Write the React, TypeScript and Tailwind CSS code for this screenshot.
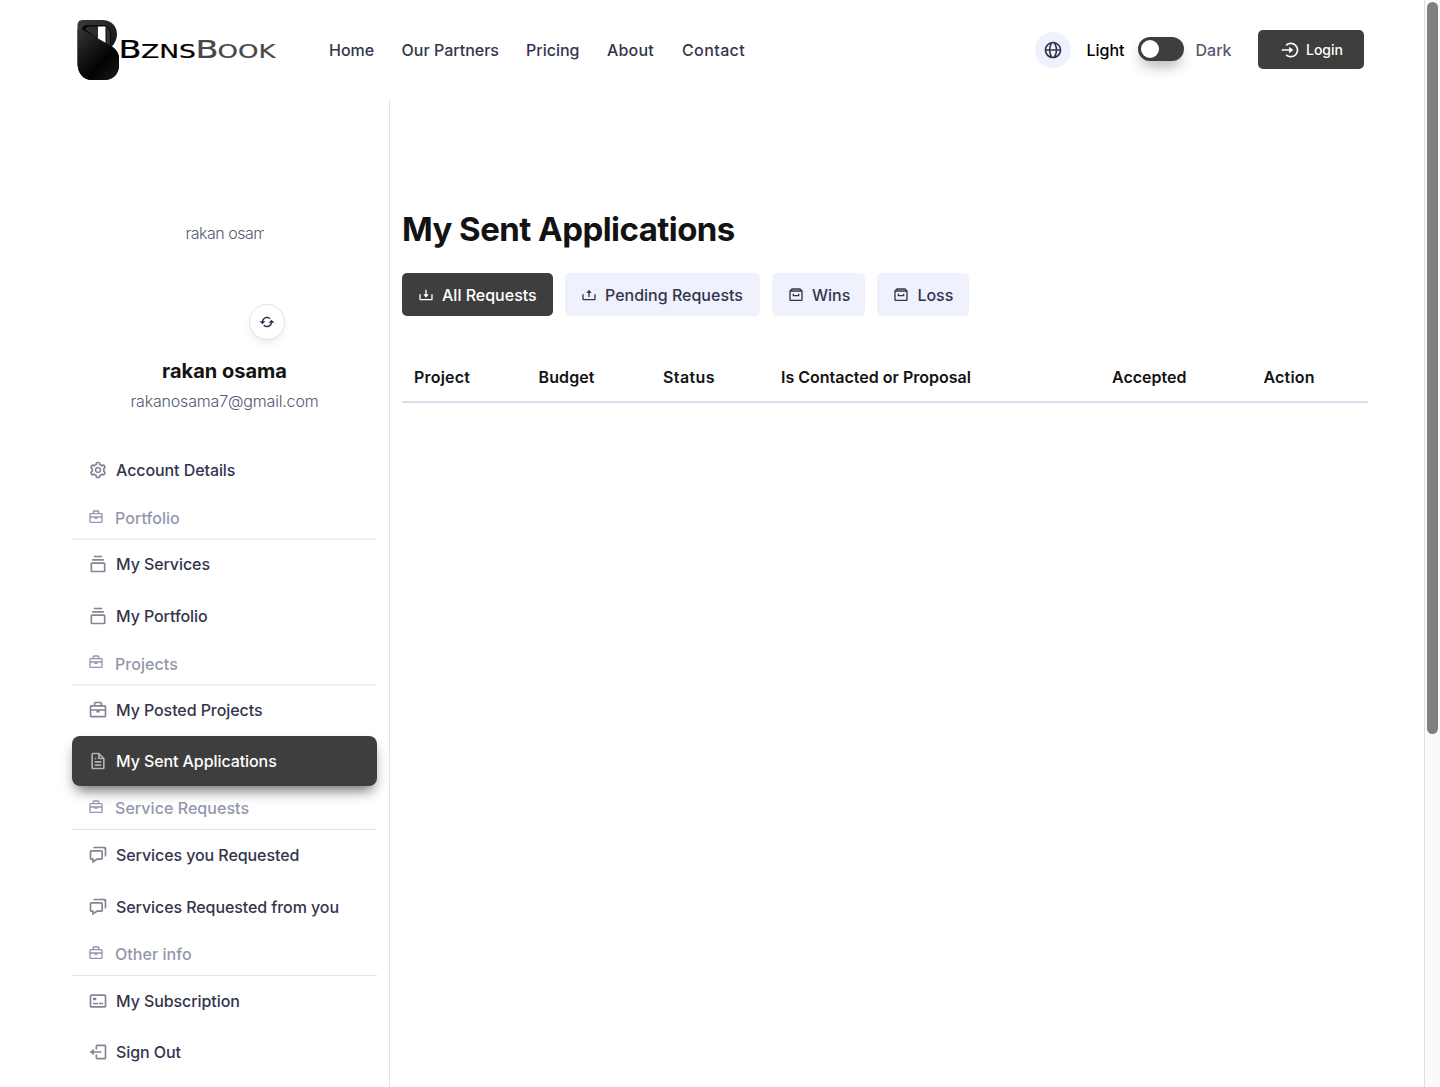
import type { ReactNode } from 'react';
import type { IconType } from 'react-icons';
import {
  BiArchive,
  BiBriefcase,
  BiChat,
  BiCog,
  BiCollection,
  BiCreditCardFront,
  BiDownload,
  BiFile,
  BiGlobe,
  BiLogInCircle,
  BiLogOut,
  BiRefresh,
  BiUpload,
} from 'react-icons/bi';

const NAV_LINKS = [
  { label: 'Home', style: 'w-[44.6px]' },
  { label: 'Our Partners', style: 'w-[96.4px]' },
  { label: 'Pricing', style: 'w-[53px]' },
  { label: 'About', style: 'w-[47px] tracking-[0.2px]' },
  { label: 'Contact', style: 'w-[64px] tracking-[0.4px]' },
];

const TABS: { label: string; icon: IconType; width: string; active?: boolean }[] = [
  { label: 'All Requests', icon: BiDownload, width: 'w-[151px]', active: true },
  { label: 'Pending Requests', icon: BiUpload, width: 'w-[195px]' },
  { label: 'Wins', icon: BiArchive, width: 'w-[93.4px]' },
  { label: 'Loss', icon: BiArchive, width: 'w-[91.6px]' },
];

const COLUMNS = [
  { label: 'Project', width: 'w-[124.5px]', tracking: 'tracking-[0.2px]' },
  { label: 'Budget', width: 'w-[124.5px]', tracking: 'tracking-[0.1px]' },
  { label: 'Status', width: 'w-[118px]', tracking: 'tracking-[0.4px]' },
  { label: 'Is Contacted or Proposal', width: 'w-[331px]', tracking: 'tracking-normal' },
  { label: 'Accepted', width: 'w-[151.5px]', tracking: 'tracking-normal' },
  { label: 'Action', width: 'w-[116.5px]', tracking: 'tracking-[0.2px]' },
];

function Logo() {
  return (
    <svg width="202" height="64" viewBox="0 0 202 64" aria-label="BznsBook">
      <defs>
        <linearGradient id="rim" x1="0" y1="0" x2="1" y2="1">
          <stop offset="0" stopColor="#3a3c3b" />
          <stop offset="0.5" stopColor="#222" />
          <stop offset="1" stopColor="#000" />
        </linearGradient>
        <linearGradient id="body" x1="0" y1="0" x2="0.8" y2="1">
          <stop offset="0" stopColor="#343434" />
          <stop offset="0.7" stopColor="#020202" />
          <stop offset="1" stopColor="#151515" />
        </linearGradient>
      </defs>
      <path
        d="M7 2H26C35 2 41 8 41 16C41 21 39 25 36 28.500C40 31 43 35 43 41V47C43 56 37 62 28 62H16C7 62 1.500 55 1.500 45V8C1.500 4 3 2 7 2Z"
        fill="url(#rim)"
      />
      <path d="M6 12C6 9 8 7 12 7H27C32 7 35 11 35 16V27L22 20Z" fill="#080808" />
      <path d="M9 11.500C10 9.500 11 8.500 13 8.500H22V20Z" fill="#2d2d2d" />
      <path d="M22 8.500H29.500V25L22 20.500Z" fill="#fff" />
      <path d="M30.500 8.500C33 10 34 13 34 17V27L30.500 25Z" fill="#333" />
      <path
        d="M5 11L34 27.500C40 31 43 35 43 41V47C43 56 37 62 28 62H16C7 62 1.500 55 1.500 45V11Z"
        fill="url(#body)"
      />
      <g fontFamily="'DejaVu Sans', sans-serif" fontSize="24" strokeWidth="0.2">
        <text x="42.500" y="39.500" stroke="#000" textLength="23" lengthAdjust="spacingAndGlyphs">B</text>
        <text x="65" y="39.500" stroke="#000" fontSize="19" textLength="55" lengthAdjust="spacingAndGlyphs">ZNS</text>
        <text x="119.500" y="39.500" fill="#484848" stroke="#484848" textLength="23" lengthAdjust="spacingAndGlyphs">B</text>
        <text x="141.500" y="39.500" fontSize="19" fill="#484848" stroke="#484848" textLength="58" lengthAdjust="spacingAndGlyphs">OOK</text>
      </g>
    </svg>
  );
}

function Header() {
  return (
    <header className="flex h-[100px] items-center pl-[76px] pr-[60px]">
      <div className="h-16 w-[202px]">
        <Logo />
      </div>
      <nav className="ml-[51px] flex gap-7 text-[#33354d]">
        {NAV_LINKS.map((link) => (
          <a key={link.label} href="#" className={`whitespace-nowrap ${link.style}`}>
            {link.label}
          </a>
        ))}
      </nav>
      <button className="ml-auto flex size-9 items-center justify-center rounded-full bg-[#eff1fc] text-[#33354d]">
        <BiGlobe size={20} />
      </button>
      <span className="ml-4 w-[39px] text-black">Light</span>
      <div className="ml-3 mb-0.5 flex h-6 w-[46px] items-center rounded-full bg-[#3e3e3e] px-[3px] shadow-[0_8px_14px_-3px_rgba(0,0,0,0.3)]">
        <div className="size-[18px] rounded-full bg-white" />
      </div>
      <span className="ml-3 w-[35px] text-[#565973]">Dark</span>
      <button className="mb-px ml-[27.500px] flex h-[39px] w-[106px] items-center justify-center gap-1.5 rounded-[5px] bg-[#3e3e3e] pl-px text-sm text-white">
        <BiLogInCircle size={20} />
        Login
      </button>
    </header>
  );
}

function SideItem({ icon: Icon, active, children }: { icon: IconType; active?: boolean; children: ReactNode }) {
  return (
    <a
      href="#"
      className={`mb-0.5 flex h-[49.500px] items-center gap-2 rounded-lg pl-4 tracking-[-0.08px] ${
        active
          ? '-mt-[0.5px] bg-[#3e3e3e] text-white shadow-[0_8px_14px_-4px_rgba(0,0,0,0.6)]'
          : 'text-[#33354d]'
      }`}
    >
      <Icon size={20} className="opacity-60" />
      <span>{children}</span>
    </a>
  );
}

function SideSection({ children, soft }: { children: ReactNode; soft?: boolean }) {
  return (
    <div
      className={`flex items-center gap-[11px] pl-4 tracking-[0.05px] text-[#9397ad] ${
        soft
          ? '-mb-[0.5px] h-[43px] border-b-2 border-[#f1f1f8] pt-px'
          : 'h-[42.8px] border-b border-[#e2e2ee]'
      }`}
    >
      <BiBriefcase size={16} className="mb-[3px]" />
      <span>{children}</span>
    </div>
  );
}

function Sidebar() {
  return (
    <aside className="w-[390px] shrink-0 border-r border-[#e2e2ee] pl-[72px] pr-3">
      <div className="flex h-[345.5px] flex-col items-center">
        {/* avatar alt text, clipped by the round frame */}
        <div className="mt-[121px] h-[19px] w-[78px] overflow-hidden rounded-t-lg font-light leading-6 tracking-[-0.5px] text-[#565973]">
          <span className="whitespace-nowrap">rakan osama</span>
        </div>
        <button className="ml-[84px] mt-[64px] flex size-9 shrink-0 items-center justify-center rounded-full border border-[#e2e2f2] bg-white text-[#33354d] shadow-[0_4px_8px_-2px_rgba(0,0,0,0.1)]">
          <BiRefresh size={18} />
        </button>
        <h2 className="mt-[17px] text-xl font-bold leading-7 text-[#131313]">rakan osama</h2>
        <p className="mt-1 font-light tracking-[-0.18px] text-[#565973]">rakanosama7@gmail.com</p>
      </div>
      <SideItem icon={BiCog}>Account Details</SideItem>
      <SideSection soft>Portfolio</SideSection>
      <SideItem icon={BiCollection}>My Services</SideItem>
      <SideItem icon={BiCollection}>My Portfolio</SideItem>
      <SideSection soft>Projects</SideSection>
      <SideItem icon={BiBriefcase}>My Posted Projects</SideItem>
      <SideItem icon={BiFile} active>My Sent Applications</SideItem>
      <SideSection>Service Requests</SideSection>
      <SideItem icon={BiChat}>Services you Requested</SideItem>
      <SideItem icon={BiChat}>Services Requested from you</SideItem>
      <SideSection>Other info</SideSection>
      <SideItem icon={BiCreditCardFront}>My Subscription</SideItem>
      <SideItem icon={BiLogOut}>Sign Out</SideItem>
    </aside>
  );
}

function Applications() {
  return (
    <main className="flex-1 pl-3 pt-[106px]">
      <h1 className="text-[33px] font-bold leading-[46px] tracking-[-0.55px] text-[#131313]">My Sent Applications</h1>
      <div className="mt-[21px] flex gap-3">
        {TABS.map(({ label, icon: Icon, width, active }) => (
          <button
            key={label}
            className={`flex h-[43px] items-center gap-2 whitespace-nowrap rounded-[5px] pl-4 ${width} ${
              active ? 'bg-[#3e3e3e] text-white' : 'bg-[#eff1fc] text-[#33354d]'
            }`}
          >
            <Icon size={16} />
            {label}
          </button>
        ))}
      </div>
      <table className="mt-9 w-[966px] table-fixed border-collapse text-left text-[#131313]">
        <thead>
          <tr className="h-[50px] border-b-2 border-[#dcdeed]">
            {COLUMNS.map((column) => (
              <th key={column.label} className={`px-3 font-semibold ${column.width} ${column.tracking}`}>
                {column.label}
              </th>
            ))}
          </tr>
        </thead>
      </table>
    </main>
  );
}

export default function App() {
  return (
    <div className="flex h-[1087px] w-[1440px] overflow-hidden bg-white font-['Inter',sans-serif] text-base font-medium">
      <div className="flex w-[1424px] flex-col">
        <Header />
        <div className="flex flex-1">
          <Sidebar />
          <Applications />
        </div>
      </div>
      <div className="w-4 border-l border-[#dedede] bg-[#fafafa] pl-0.5 pt-0.5">
        <div className="h-[732px] w-[11px] rounded-full bg-[#7f7f7f]" />
      </div>
    </div>
  );
}
